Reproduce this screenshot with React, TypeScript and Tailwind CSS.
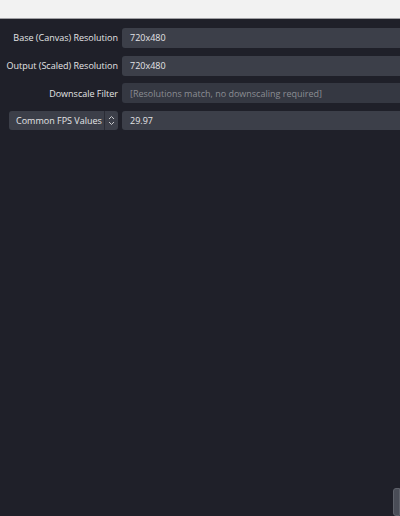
import React from 'react';

const Row: React.FC<{ label: string; value: string; disabled?: boolean }> = ({ label, value, disabled }) => (
  <div className="flex items-center h-[20px]">
    <div className="w-[118px] shrink-0 text-right text-[9px] text-[#e4e4e6]">{label}</div>
    <div
      className={
        'ml-[4px] flex-1 h-[20px] rounded-l-[3px] flex items-center pl-[8px] text-[9px] ' +
        (disabled ? 'bg-[#353842] text-[#8b8d93]' : 'bg-[#3c3f49] text-[#e4e4e6]')
      }
    >
      {value}
    </div>
  </div>
);

const App: React.FC = () => {
  return (
    <div className="w-[400px] h-[516px] flex flex-col bg-[#1f2029] overflow-hidden" style={{ fontFamily: '"Open Sans", "Noto Sans", sans-serif' }}>
      <div className="h-[19px] shrink-0 bg-[#f2f2f2] border-b border-[#a0a0a4]" />
      <div className="flex-1 flex flex-col gap-[7.7px] pt-[9px] relative">
        <Row label="Base (Canvas) Resolution" value="720x480" />
        <Row label="Output (Scaled) Resolution" value="720x480" />
        <Row label="Downscale Filter" value="[Resolutions match, no downscaling required]" disabled />
        <div className="flex items-center h-[19px]">
          <div className="ml-[9px] w-[109px] h-[19px] rounded-[3px] bg-[#3c3f49] flex items-center text-[9px] text-[#e4e4e6]">
            <span className="flex-1 pl-[7px]">Common FPS Values</span>
            <div className="w-px h-[19px] bg-[#2a2c35]" />
            <svg width="13" height="19" viewBox="0 0 13 19" className="shrink-0">
              <path d="M4 8 L6.5 5.5 L9 8" stroke="#c9cacd" strokeWidth="1" fill="none" />
              <path d="M4 11 L6.5 13.5 L9 11" stroke="#c9cacd" strokeWidth="1" fill="none" />
            </svg>
          </div>
          <div className="ml-[4px] flex-1 h-[19px] rounded-l-[3px] bg-[#3c3f49] flex items-center pl-[8px] text-[9px] text-[#e4e4e6]">
            29.97
          </div>
        </div>
        <div className="absolute right-0 bottom-0 w-[7px] h-[28px] rounded-l-[3px] bg-[#4a4d57] border border-[#5e616a]" />
      </div>
    </div>
  );
};

export default App;
